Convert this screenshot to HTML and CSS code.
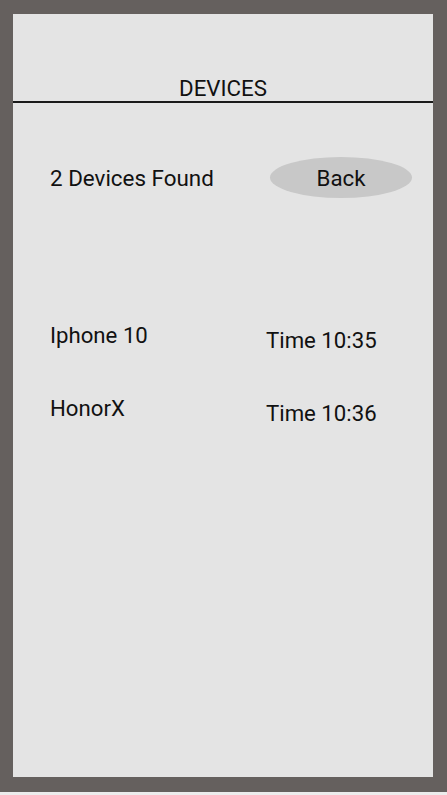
FILE: index.html
```html
<!DOCTYPE html>
<html lang="en">
<head>
<meta charset="utf-8">
<title>Devices</title>
<link rel="stylesheet" href="styles.css">
</head>
<body>
<div class="frame">
  <main class="panel">
    <header class="header">
      <h1 class="title">DEVICES</h1>
    </header>
    <section class="summary">
      <span class="count">2 Devices Found</span>
      <button class="back" type="button">Back</button>
    </section>
    <ul class="devices">
      <li class="device">
        <span class="device-name">Iphone 10</span>
        <span class="device-time">Time 10:35</span>
      </li>
      <li class="device">
        <span class="device-name">HonorX</span>
        <span class="device-time">Time 10:36</span>
      </li>
    </ul>
  </main>
</div>
</body>
</html>
```

FILE: styles.css
```css
html, body {
  margin: 0;
  padding: 0;
}

body {
  background: #ececec;
  font-family: Roboto, "Liberation Sans", Arial, sans-serif;
  color: #111111;
}

.frame {
  box-sizing: border-box;
  width: 447px;
  height: 792px;
  background: #65605e;
  padding: 14px 14px 15px 13px;
  display: flex;
}

.panel {
  flex: 1;
  background: #e4e4e4;
  display: flex;
  flex-direction: column;
}

.header {
  padding-top: 61px;
  border-bottom: 2px solid #1a1a1a;
}

.title {
  margin: 0;
  font-size: 22.3px;
  font-weight: 400;
  line-height: 26px;
  text-align: center;
}

.summary {
  margin-top: 54px;
  padding: 0 21px 0 37px;
  display: flex;
  align-items: center;
  justify-content: space-between;
}

.count {
  font-size: 22.4px;
  line-height: 26px;
}

.back {
  width: 142px;
  height: 41px;
  border: none;
  border-radius: 50%;
  background: #c8c8c8;
  font-family: inherit;
  font-size: 22.3px;
  color: #111111;
  padding: 0;
}

.devices {
  list-style: none;
  margin: 124px 0 0;
  padding: 0 0 0 37px;
  display: flex;
  flex-direction: column;
  gap: 42px;
}

.device {
  display: grid;
  grid-template-columns: 216px auto;
  font-size: 22.2px;
  line-height: 26px;
}

.device-time {
  padding-top: 5px;
}
```
